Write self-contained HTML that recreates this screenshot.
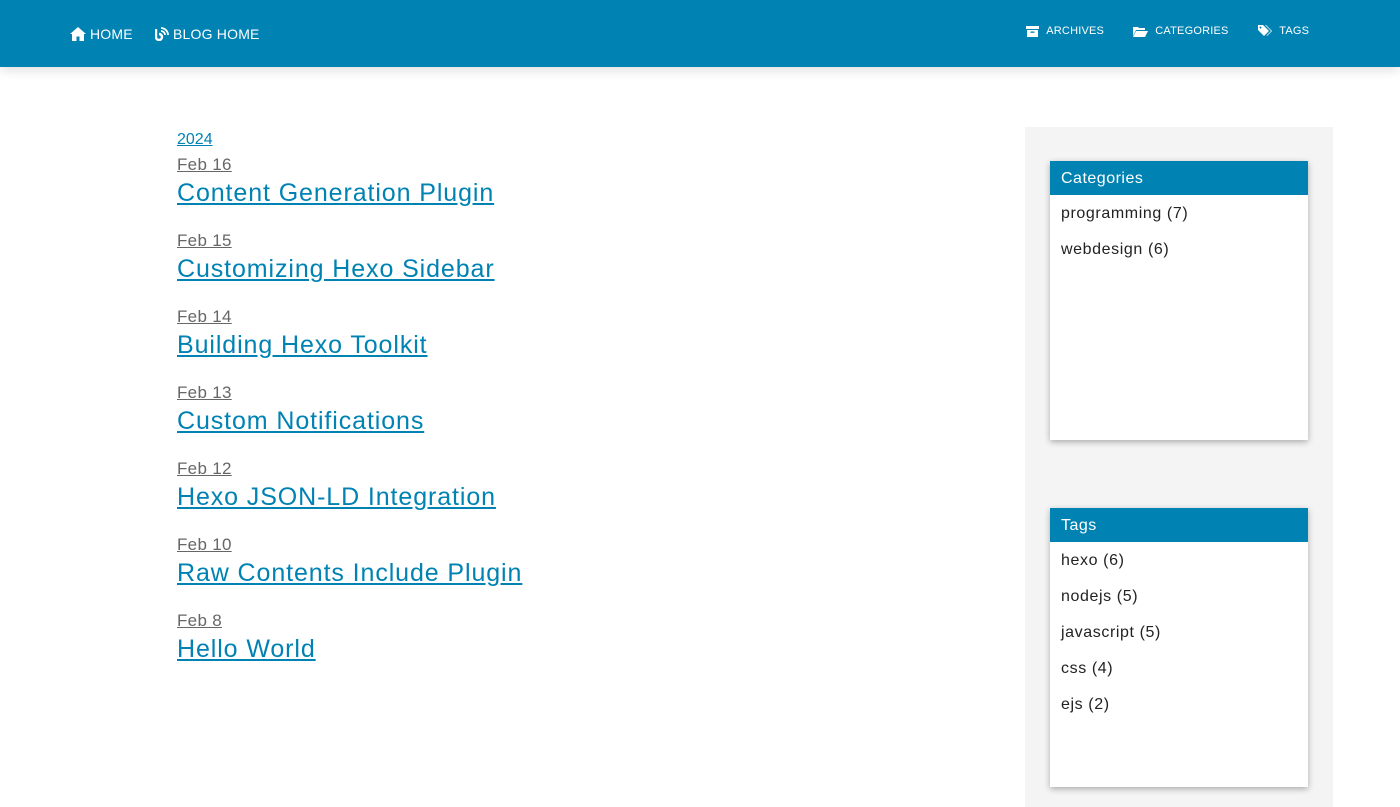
<!DOCTYPE html>
<html><head><meta charset="utf-8"><style>
*{margin:0;padding:0;box-sizing:border-box}
body{width:1400px;height:800px;overflow:hidden;background:#fff;font-family:"Liberation Sans",sans-serif;position:relative}
.hdr{position:absolute;left:0;top:0;width:1400px;height:67px;background:#0082b3;box-shadow:0 2px 12px rgba(0,0,0,.15);color:#fff}
.hdr span{position:absolute;display:flex;align-items:center;gap:4px;white-space:nowrap}
.big{font-size:14px;top:25px;letter-spacing:.2px}
.sm{font-size:11px;top:25px;letter-spacing:.2px}
.yr{position:absolute;left:177px;top:131px;font-size:16px;color:#0082b3;text-decoration:underline}
.d{position:absolute;left:177px;font-size:17px;color:#666;text-decoration:underline;letter-spacing:.3px}
.t{position:absolute;left:177px;font-size:25px;color:#0082b3;text-decoration:underline;letter-spacing:.9px}
.side{position:absolute;left:1025px;top:127px;width:308px;height:680px;background:#f4f4f4}
.w{position:absolute;left:1050px;width:258px;background:#fff;box-shadow:0 2px 6px rgba(0,0,0,.3)}
.w h3{background:#0082b3;color:#fff;font-weight:normal;font-size:16px;height:34px;line-height:36px;padding-left:11px;letter-spacing:.5px}
.w p{font-size:16px;color:#222;padding-left:11px;height:36px;line-height:38px;letter-spacing:.6px}
</style></head><body>
<div class="hdr">
<span class="big" style="left:70px;top:26px"><svg width="16" height="14" viewBox="0 0 16 14"><path d="M8 0L0 7h2v7h4.5V9.5h3V14H14V7h2z" fill="#fff"/></svg>HOME</span>
<span class="big" style="left:155px;top:26px"><svg width="14" height="14" viewBox="0 0 14 14"><path d="M1 2v8a3 3 0 1 0 3-3" stroke="#fff" stroke-width="2.4" fill="none"/><path d="M6 1a7 7 0 0 1 7 7M6 4a4 4 0 0 1 4 4" stroke="#fff" stroke-width="1.8" fill="none"/></svg>BLOG HOME</span>
<span class="sm" style="left:1026px"><svg width="13" height="11" viewBox="0 0 13 11"><rect x="0" y="0" width="13" height="3" fill="#fff"/><rect x="1" y="4" width="11" height="7" fill="#fff"/><rect x="4.5" y="5.5" width="4" height="1.3" fill="#0082b3"/></svg>&nbsp;ARCHIVES</span>
<span class="sm" style="left:1133px"><svg width="15" height="11" viewBox="0 0 15 11"><path d="M0 1h5l1 1h6v2H3L0 10z M3 5h12l-3 6H0z" fill="#fff"/></svg>&nbsp;CATEGORIES</span>
<span class="sm" style="left:1258px"><svg width="14" height="12" viewBox="0 0 14 12"><path d="M0 0h5l6 6-5 5-6-6z" fill="#fff"/><path d="M7 0h1l6 6-5 5-.5-.5 4.5-4.5z" fill="#fff"/><circle cx="2.5" cy="2.5" r="1" fill="#0082b3"/></svg>&nbsp;TAGS</span>
</div>
<div class="yr">2024</div>
<div class="d" style="top:155px">Feb 16</div><div class="t" style="top:179px">Content Generation Plugin</div>
<div class="d" style="top:231px">Feb 15</div><div class="t" style="top:255px">Customizing Hexo Sidebar</div>
<div class="d" style="top:307px">Feb 14</div><div class="t" style="top:331px">Building Hexo Toolkit</div>
<div class="d" style="top:383px">Feb 13</div><div class="t" style="top:407px">Custom Notifications</div>
<div class="d" style="top:459px">Feb 12</div><div class="t" style="top:483px">Hexo JSON-LD Integration</div>
<div class="d" style="top:535px">Feb 10</div><div class="t" style="top:559px">Raw Contents Include Plugin</div>
<div class="d" style="top:611px">Feb 8</div><div class="t" style="top:635px">Hello World</div>
<div class="side"></div>
<div class="w" style="top:161px;height:279px"><h3>Categories</h3><p>programming (7)</p><p>webdesign (6)</p></div>
<div class="w" style="top:508px;height:279px"><h3>Tags</h3><p>hexo (6)</p><p>nodejs (5)</p><p>javascript (5)</p><p>css (4)</p><p>ejs (2)</p></div>
</body></html>
